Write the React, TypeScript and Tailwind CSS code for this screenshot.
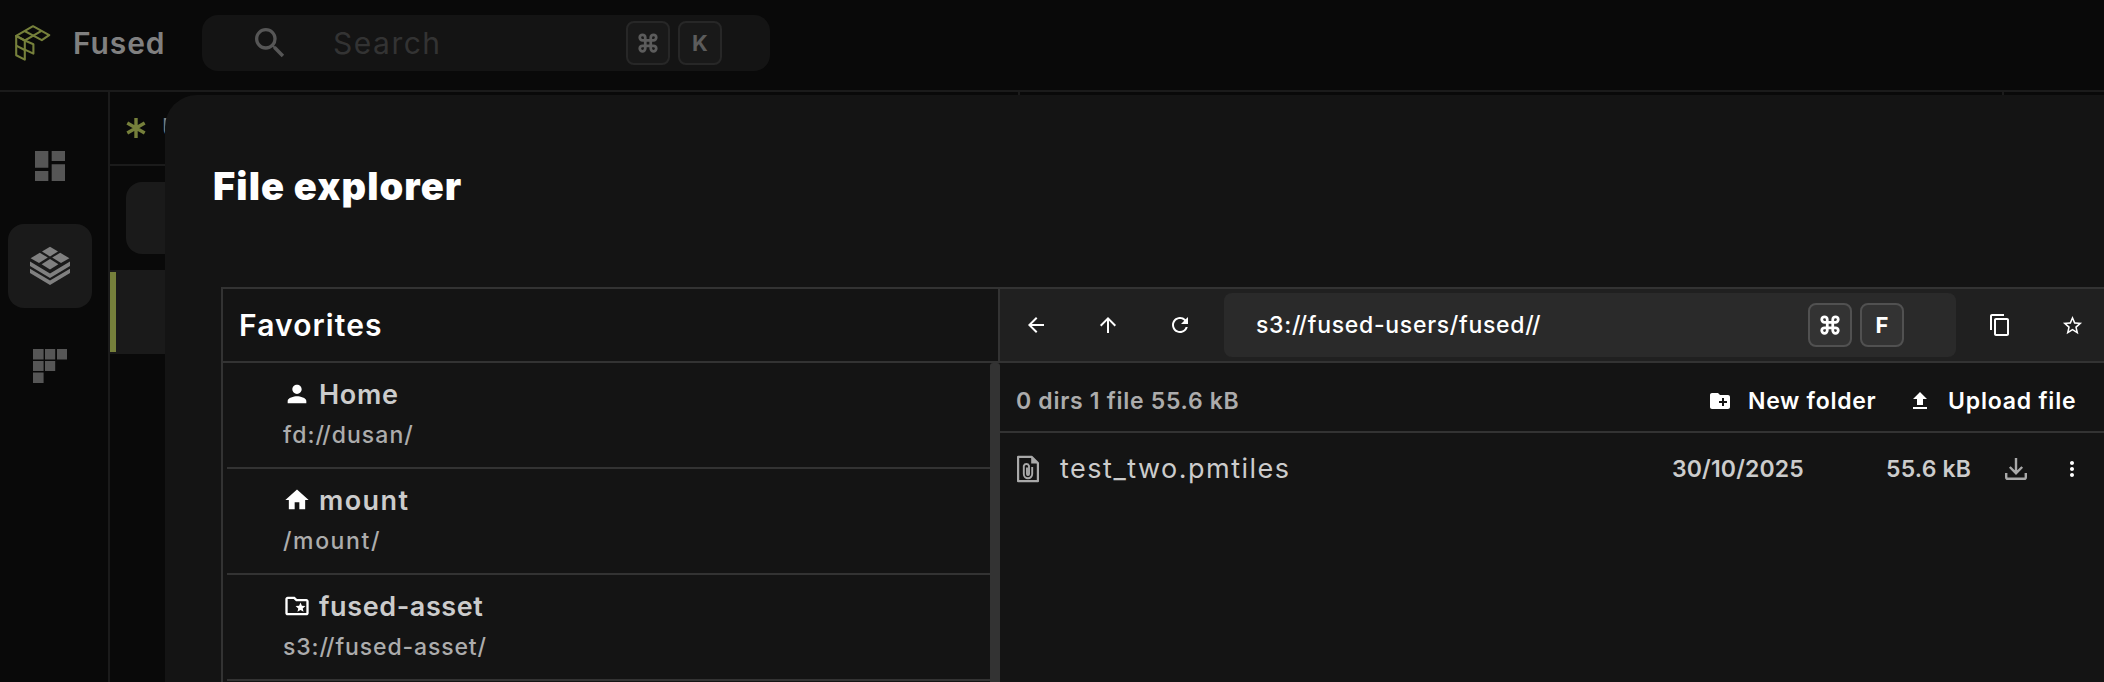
import type { ReactNode } from "react";
import { Command } from "lucide-react";
import {
  MdArrowBack,
  MdArrowUpward,
  MdContentCopy,
  MdCreateNewFolder,
  MdDashboard,
  MdHome,
  MdMoreVert,
  MdOutlineFolderSpecial,
  MdPerson,
  MdRefresh,
  MdSearch,
  MdStarBorder,
  MdUpload,
} from "react-icons/md";

const favorites = [
  {
    icon: <MdPerson size={28} />,
    name: "Home",
    path: "fd://dusan/",
    nameClass: "tracking-[0.7px]",
    pathClass: "tracking-[1.05px]",
  },
  {
    icon: <MdHome size={28} />,
    name: "mount",
    path: "/mount/",
    nameClass: "tracking-[1.4px]",
    pathClass: "tracking-[1.6px]",
  },
  {
    icon: <MdOutlineFolderSpecial size={28} />,
    name: "fused-asset",
    path: "s3://fused-asset/",
    nameClass: "tracking-[0.6px]",
    pathClass: "tracking-[0.87px]",
  },
];

function Logo() {
  return (
    <svg
      width="36"
      height="36"
      viewBox="0 0 36 36"
      fill="none"
      stroke="#76803b"
      strokeWidth="2.1"
      strokeLinejoin="round"
      className="shrink-0"
    >
      <path d="M1.2 10.8 18 1.2 34.2 10.2 26.8 15.2 18.3 10.6 9.8 15.5z" />
      <path d="M9.6 6 18.3 10.6 26.5 5.8" />
      <path d="M1.2 10.8V30.2L9.8 34.6V15.5z" />
      <path d="M1.2 20.6 9.8 25" />
      <path d="M9.8 15.5 18.4 19.2V28.6L9.8 24.6" />
    </svg>
  );
}

function StackIcon() {
  return (
    <svg width="40" height="40" viewBox="0 0 40 40" fill="#808080">
      <path d="M20 .8 28 5.6 20 10.4 12 5.6z" />
      <path d="M9.8 6.8 17.8 11.6 9 17 .6 12.2z" />
      <path d="M30.2 6.8 39.4 12.2 31 17 22.2 11.6z" />
      <path d="M20 13 28.4 18.2 20 23.6 11.6 18.2z" />
      <path d="M0 15.6 20 27.6 40 15.6V20L20 32 0 20z" />
      <path d="M0 22.8 20 34.6 40 22.8V27L20 39 0 27z" />
    </svg>
  );
}

function BlocksIcon() {
  return (
    <svg width="34" height="34" viewBox="0 0 34 34" fill="#565656">
      <path d="M0 0h10.6v10.6H0zM12 0h10.2v10.6H12zM24 0h10v10.6H24z" />
      <path d="M0 12h10.6v10H0zM12 12h10.2v10H12zM0 23.4h10.6V34H0z" />
    </svg>
  );
}

function FileIcon() {
  return (
    <svg
      width="22"
      height="28"
      viewBox="0 0 22 28"
      fill="none"
      stroke="#a9a9a9"
      strokeWidth="2.2"
      strokeLinejoin="round"
      className="shrink-0"
    >
      <path d="M1.1 1.8h13.5L20.9 8v18.2H1.1z" />
      <path d="M14.2 1.5 21 8.4h-6.8z" fill="#a9a9a9" stroke="none" />
      <path
        d="M15.2 12v7a4.2 4.2 0 0 1-8.4 0v-8.2a2.8 2.8 0 0 1 5.2 0V19a1 1 0 0 1-2 0v-6.5"
        strokeWidth="1.9"
      />
    </svg>
  );
}

function DownloadIcon() {
  return (
    <svg
      width="22"
      height="22"
      viewBox="0 0 22 22"
      fill="none"
      stroke="#a9a9a9"
      strokeWidth="2.4"
      className="shrink-0"
    >
      <path d="M11 0v15M4.8 9 11 15.2 17.2 9" />
      <path d="M1.2 15v4.2q0 1.6 1.6 1.6h16.4q1.6 0 1.6-1.6V15" />
    </svg>
  );
}

function Key({ children, dim }: { children: ReactNode; dim?: boolean }) {
  return (
    <kbd
      className={`flex h-11 w-11 shrink-0 items-center justify-center rounded-lg border-2 font-['Inter',sans-serif] text-[22px] font-bold ${
        dim
          ? "border-[#272727] bg-[#191919] text-[#5c5c5c]"
          : "border-[#515151] bg-[#333333] text-white"
      }`}
    >
      {children}
    </kbd>
  );
}

// double slashes are set tighter than the rest of the path
function PathText({ path }: { path: string }) {
  return (
    <>
      {path.split("//").map((part, index) => (
        <span key={index}>
          {index > 0 && (
            <>
              <span className="tracking-[-1.8px]">/</span>/
            </>
          )}
          {part}
        </span>
      ))}
    </>
  );
}

function Header() {
  return (
    <header className="flex h-[92px] items-center border-b-2 border-[#1b1b1b] pb-1 pl-[15px]">
      <Logo />
      <span className="ml-[22px] w-[129px] text-[30px] font-semibold tracking-[0.9px] text-[#808080]">
        Fused
      </span>
      <div className="flex h-14 w-[568px] items-center rounded-2xl bg-[#141414] pr-12 pl-12">
        <MdSearch size={40} className="shrink-0 text-[#565656]" />
        <span className="ml-[43px] flex-1 text-[30px] tracking-[1.5px] text-[#333333]">
          Search
        </span>
        <div className="flex gap-2">
          <Key dim>
            <Command size={22} strokeWidth={3} />
          </Key>
          <Key dim>K</Key>
        </div>
      </div>
    </header>
  );
}

function Sidebar() {
  return (
    <nav className="flex w-[110px] shrink-0 flex-col gap-4 border-r-2 border-[#1b1b1b] px-2 pt-8">
      <div className="flex h-[84px] w-[84px] items-center justify-center text-[#565656]">
        <MdDashboard size={40} />
      </div>
      <div className="flex h-[84px] w-[84px] items-center justify-center rounded-2xl bg-[#1a1a1a]">
        <StackIcon />
      </div>
      <div className="flex h-[84px] w-[84px] items-center justify-center">
        <BlocksIcon />
      </div>
    </nav>
  );
}

function UdfPanel() {
  return (
    <div className="w-[910px] shrink-0 border-r-2 border-[#1b1b1b]">
      <div className="flex h-[74px] items-center border-b-2 border-[#1b1b1b] pl-4">
        <svg
          width="20"
          height="20"
          viewBox="0 0 20 20"
          stroke="#76803b"
          strokeWidth="3.4"
        >
          <path d="M10 0v20M1.3 5l17.4 10M18.7 5 1.3 15" />
        </svg>
        <span className="ml-4 text-[24px] font-medium text-[#808080]">UDFs</span>
      </div>
      <div className="mt-4 ml-4 h-[72px] rounded-2xl bg-[#1a1a1a]" />
      <div className="mt-4 flex h-[84px] items-center bg-[#1a1a1a]">
        <div className="h-20 w-1.5 bg-[#76803b]" />
      </div>
    </div>
  );
}

function Favorites() {
  return (
    <div className="w-[777px] shrink-0">
      <div className="flex h-[74px] items-center border-r-2 border-b-2 border-[#333333] pl-4 text-[30px] font-semibold tracking-[1.1px] text-white">
        Favorites
      </div>
      <div className="flex">
        <ul className="w-[767px] pl-1">
          {favorites.map((item) => (
            <li
              key={item.name}
              className="h-[106px] border-b-2 border-[#333333] pt-3 pl-14"
            >
              <div className="flex h-10 items-center text-white">
                <span className="mb-0.5">{item.icon}</span>
                <span
                  className={`ml-2 text-[27px] font-semibold text-[#cccccc] ${item.nameClass}`}
                >
                  {item.name}
                </span>
              </div>
              <p
                className={`h-10 text-[23px] leading-10 font-medium text-[#acacac] ${item.pathClass}`}
              >
                <PathText path={item.path} />
              </p>
            </li>
          ))}
        </ul>
        <div className="h-[330px] w-[10px] rounded-t-[3px] bg-[#333333]" />
      </div>
    </div>
  );
}

function ToolButton({ children }: { children: ReactNode }) {
  return (
    <button className="flex h-[72px] w-[72px] shrink-0 items-center justify-center text-white">
      {children}
    </button>
  );
}

function Browser() {
  return (
    <div className="w-[1108px] shrink-0">
      <div className="flex h-[74px] items-center border-b-2 border-[#333333] bg-[#202020]">
        <ToolButton>
          <MdArrowBack size={24} />
        </ToolButton>
        <ToolButton>
          <MdArrowUpward size={24} />
        </ToolButton>
        <ToolButton>
          <MdRefresh size={24} />
        </ToolButton>
        <div className="mx-2 flex h-16 w-[732px] shrink-0 items-center rounded-lg bg-[#2a2a2a] pr-[52px] pl-8">
          <span className="flex-1 text-[23px] font-medium tracking-[0.7px] text-white">
            <PathText path="s3://fused-users/fused//" />
          </span>
          <div className="flex gap-2">
            <Key>
              <Command size={22} strokeWidth={3} />
            </Key>
            <Key>F</Key>
          </div>
        </div>
        <ToolButton>
          <MdContentCopy size={24} />
        </ToolButton>
        <ToolButton>
          <MdStarBorder size={23} />
        </ToolButton>
      </div>

      <div className="flex h-[70px] items-center border-b-2 border-[#333333] pt-2 pl-4 text-[23px] font-semibold">
        <span className="w-[692px] tracking-[0.7px] text-[#acacac]">
          0 dirs 1 file 55.6 kB
        </span>
        <button className="flex w-[200px] items-center text-white">
          <MdCreateNewFolder size={24} className="shrink-0" />
          <span className="ml-4 tracking-[0.7px] whitespace-nowrap">
            New folder
          </span>
        </button>
        <button className="flex items-center text-white">
          <MdUpload size={24} className="shrink-0" />
          <span className="ml-4 tracking-[0.8px] whitespace-nowrap">
            Upload file
          </span>
        </button>
      </div>

      <div className="flex h-[72px] items-center pl-[17px] font-semibold text-[#cccccc]">
        <FileIcon />
        <span className="ml-[21px] w-[612px] text-[27px] font-normal tracking-[1.5px]">
          test_two.pmtiles
        </span>
        <span className="w-[214px] text-[23px] tracking-[0.15px]">30/10/2025</span>
        <span className="w-[119px] text-[23px] tracking-[0.2px]">55.6 kB</span>
        <DownloadIcon />
        <MdMoreVert size={24} className="ml-[33px] text-white" />
      </div>
    </div>
  );
}

function FileExplorerDialog() {
  return (
    <div className="absolute top-[95px] left-[165px] h-[620px] w-[1990px] rounded-tl-[32px] bg-[#141414]">
      <h1 className="h-[192px] pt-[63px] pl-12 text-[38px] leading-[56px] font-black tracking-[1.1px] text-white">
        File explorer
      </h1>
      <div className="ml-14 flex border-t-2 border-l-2 border-[#333333]">
        <Favorites />
        <Browser />
      </div>
    </div>
  );
}

export default function App() {
  return (
    <div className="relative h-[682px] w-full overflow-hidden bg-[#090909] font-['Inter',sans-serif]">
      <Header />
      <div className="flex h-[590px]">
        <Sidebar />
        <UdfPanel />
        <div className="w-[984px] shrink-0 border-r-2 border-[#1b1b1b]" />
      </div>
      <FileExplorerDialog />
    </div>
  );
}
